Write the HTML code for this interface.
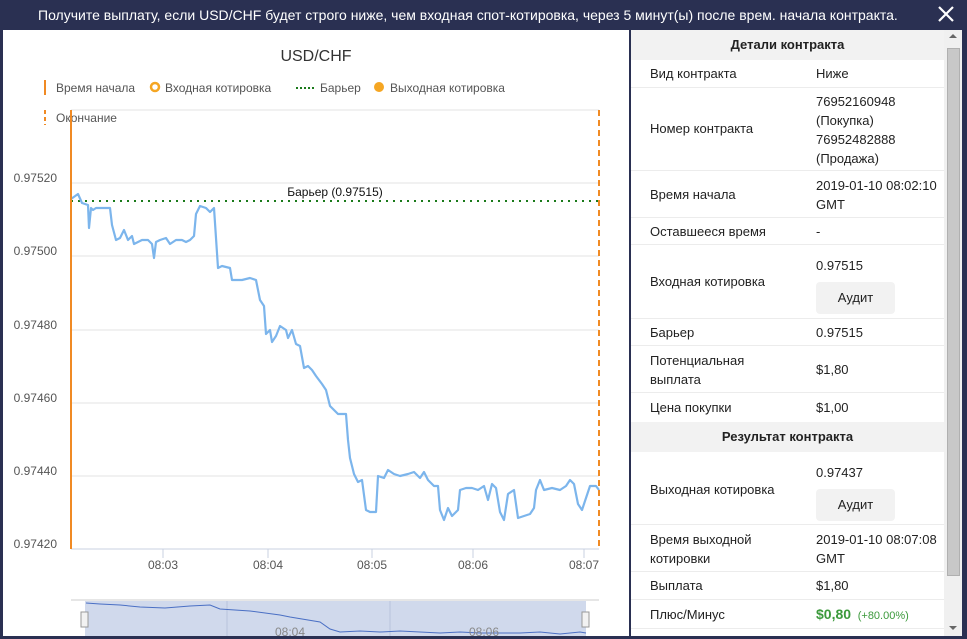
<!DOCTYPE html>
<html><head><meta charset="utf-8"><style>
*{margin:0;padding:0;box-sizing:border-box}
body{width:967px;height:639px;background:#2a3052;font-family:"Liberation Sans","DejaVu Sans",sans-serif;position:relative;overflow:hidden}
.top{position:absolute;left:0;top:0;width:967px;height:30px;color:#fff;font-size:14px;line-height:30px;padding-left:38px}
.close{position:absolute;right:12px;top:4px;width:18px;height:20px}
.left{position:absolute;left:3px;top:30px;width:626px;height:606px;background:#fff;overflow:hidden}
.right{position:absolute;left:631px;top:30px;width:313px;height:606px;background:#fff;font-size:13px;color:#222}
.sb{position:absolute;left:944px;top:30px;width:18px;height:606px;background:#f0f0f0}
.thumb{position:absolute;left:947px;top:48px;width:13px;height:528px;background:#c8c8c8;border:1px solid #b0b0b0}
.hd{background:#f2f2f2;font-weight:bold;text-align:center;position:absolute;left:0;width:313px}
.row{position:absolute;left:0;width:313px;border-bottom:1px solid #ececec}
.l{position:absolute;left:19px}
.v{position:absolute;left:185px;line-height:19px}
.btn{position:absolute;left:185px;width:79px;height:32px;background:#f2f2f2;border-radius:4px;text-align:center;line-height:32px}
</style></head><body>
<div class="top">Получите выплату, если USD/CHF будет строго ниже, чем входная спот-котировка, через 5 минут(ы) после врем. начала контракта.</div>
<svg class="close" viewBox="0 0 18 20"><path d="M2 3L16 17M16 3L2 17" stroke="#fff" stroke-width="2.2"/></svg>
<div class="left">
<svg width="626" height="606" viewBox="3 30 626 606" style="position:absolute;left:0;top:0" font-family="Liberation Sans,DejaVu Sans,sans-serif">
<text x="316" y="61" font-size="16" fill="#333" text-anchor="middle">USD/CHF</text>
<line x1="45" y1="80" x2="45" y2="95" stroke="#f08a24" stroke-width="2"/>
<text x="56" y="92" font-size="12" fill="#555">Время начала</text>
<circle cx="155" cy="87" r="4" fill="none" stroke="#f5a623" stroke-width="2.5"/>
<text x="165" y="92" font-size="12" fill="#555">Входная котировка</text>
<line x1="296" y1="88" x2="316" y2="88" stroke="#1a7a1a" stroke-width="2" stroke-dasharray="2,2"/>
<text x="320" y="92" font-size="12" fill="#555">Барьер</text>
<circle cx="379" cy="87" r="5" fill="#f5a623"/>
<text x="390" y="92" font-size="12" fill="#555">Выходная котировка</text>
<line x1="45" y1="110" x2="45" y2="125" stroke="#f08a24" stroke-width="2" stroke-dasharray="4,3"/>
<text x="56" y="122" font-size="12" fill="#555">Окончание</text>
<g stroke="#e3e3e3" stroke-width="1">
<line x1="71" y1="110" x2="599" y2="110"/><line x1="71" y1="183" x2="599" y2="183"/><line x1="71" y1="256" x2="599" y2="256"/><line x1="71" y1="330" x2="599" y2="330"/><line x1="71" y1="403" x2="599" y2="403"/><line x1="71" y1="476" x2="599" y2="476"/>
</g>
<line x1="71" y1="549" x2="599" y2="549" stroke="#c8d0e0"/>
<g stroke="#c8d0e0"><line x1="163" y1="549" x2="163" y2="558"/><line x1="268" y1="549" x2="268" y2="558"/><line x1="372" y1="549" x2="372" y2="558"/><line x1="473" y1="549" x2="473" y2="558"/><line x1="584" y1="549" x2="584" y2="558"/></g>
<g font-size="12" fill="#555" text-anchor="end">
<text x="57" y="182">0.97520</text><text x="57" y="255">0.97500</text><text x="57" y="329">0.97480</text><text x="57" y="402">0.97460</text><text x="57" y="475">0.97440</text><text x="57" y="548">0.97420</text></g>
<g font-size="12" fill="#555" text-anchor="middle">
<text x="163" y="569">08:03</text><text x="268" y="569">08:04</text><text x="372" y="569">08:05</text><text x="473" y="569">08:06</text><text x="584" y="569">08:07</text></g>
<line x1="71" y1="201" x2="599" y2="201" stroke="#1a7a1a" stroke-width="2" stroke-dasharray="2,5"/>
<text x="335" y="196" font-size="12" fill="#111" text-anchor="middle">Барьер (0.97515)</text>
<polyline fill="none" stroke="#7cb5ec" stroke-width="2.2" stroke-linejoin="round" points="71,199 78,194 82,203 88,205 89,228 91,208 93,210 96,208 100,208 110,208 112,225 116,240 120,238 124,230 128,240 132,236 134,244 138,242 142,240 148,240 152,244 154,258 156,242 160,240 166,238 170,244 176,240 182,240 186,242 190,240 194,236 196,214 200,206 206,208 210,212 214,208 216,238 218,268 222,266 230,268 232,280 242,280 250,278 256,280 260,300 264,306 266,334 270,330 272,342 276,336 280,326 286,330 288,338 292,330 296,344 300,346 304,368 308,366 312,370 316,376 322,384 326,390 330,406 334,410 338,414 346,414 348,440 350,458 354,474 358,482 362,480 366,510 370,512 376,512 378,476 384,478 388,470 394,474 400,476 408,474 414,472 420,478 424,472 428,480 434,486 438,486 440,510 444,520 448,508 452,516 458,510 460,490 466,488 472,488 478,490 484,486 488,500 492,484 496,488 500,512 504,520 508,494 514,490 518,518 524,516 530,514 534,508 536,490 540,480 544,490 552,488 560,490 566,486 570,480 574,484 578,504 582,510 586,498 590,486 596,486 599,490"/>
<line x1="71" y1="110" x2="71" y2="549" stroke="#f08a24" stroke-width="2"/>
<line x1="599" y1="110" x2="599" y2="549" stroke="#f08a24" stroke-width="2" stroke-dasharray="6,4"/>
<line x1="71" y1="600" x2="599" y2="600" stroke="#ccc"/>
<rect x="85" y="601" width="501" height="40" fill="#d0d9ec"/>
<line x1="227" y1="601" x2="227" y2="640" stroke="#b8c4dc"/><line x1="390" y1="601" x2="390" y2="640" stroke="#b8c4dc"/>
<polyline fill="none" stroke="#4a6fc4" stroke-width="1" points="86,603 100,604 120,605 140,607 165,608 190,606 210,605 220,609 250,611 280,615 290,617 320,622 330,629 340,632 360,631 380,632 400,631 420,632 440,633 460,632 480,633 500,633 520,633 540,632 560,634 580,632 586,633"/>
<text x="290" y="636" font-size="12" fill="#888" text-anchor="middle">08:04</text>
<text x="484" y="636" font-size="12" fill="#888" text-anchor="middle">08:06</text>
<rect x="81" y="612" width="7" height="15" fill="#f2f2f2" stroke="#999"/>
<rect x="582" y="612" width="7" height="15" fill="#f2f2f2" stroke="#999"/>
</svg>
</div>
<div class="right">
<div class="hd" style="top:0;height:30px;line-height:30px">Детали контракта</div>
<div class="row" style="top:30px;height:28px"><span class="l" style="top:6px">Вид контракта</span><span class="v" style="top:4px">Ниже</span></div>
<div class="row" style="top:58px;height:83px"><span class="l" style="top:33px">Номер контракта</span><span class="v" style="top:4px">76952160948<br>(Покупка)<br>76952482888<br>(Продажа)</span></div>
<div class="row" style="top:141px;height:47px"><span class="l" style="top:16px">Время начала</span><span class="v" style="top:5px">2019-01-10 08:02:10<br>GMT</span></div>
<div class="row" style="top:188px;height:27px"><span class="l" style="top:6px">Оставшееся время</span><span class="v" style="top:4px">-</span></div>
<div class="row" style="top:215px;height:74px"><span class="l" style="top:29px">Входная котировка</span><span class="v" style="top:11px">0.97515</span><div class="btn" style="top:37px">Аудит</div></div>
<div class="row" style="top:289px;height:27px"><span class="l" style="top:6px">Барьер</span><span class="v" style="top:4px">0.97515</span></div>
<div class="row" style="top:316px;height:47px"><span class="l" style="top:5px;line-height:19px">Потенциальная<br>выплата</span><span class="v" style="top:14px">$1,80</span></div>
<div class="row" style="top:363px;height:29px;border:0"><span class="l" style="top:7px">Цена покупки</span><span class="v" style="top:5px">$1,00</span></div>
<div class="hd" style="top:392px;height:30px;line-height:30px">Результат контракта</div>
<div class="row" style="top:422px;height:73px"><span class="l" style="top:30px">Выходная котировка</span><span class="v" style="top:11px">0.97437</span><div class="btn" style="top:37px">Аудит</div></div>
<div class="row" style="top:495px;height:47px"><span class="l" style="top:5px;line-height:19px">Время выходной<br>котировки</span><span class="v" style="top:5px">2019-01-10 08:07:08<br>GMT</span></div>
<div class="row" style="top:542px;height:28px"><span class="l" style="top:6px">Выплата</span><span class="v" style="top:4px">$1,80</span></div>
<div class="row" style="top:570px;height:29px"><span class="l" style="top:7px">Плюс/Минус</span><span class="v" style="top:5px"><b style="color:#3c9a3c;font-size:14px">$0,80</b> <span style="color:#3c9a3c;font-size:11px">&nbsp;(+80.00%)</span></span></div>
</div>
<div class="sb"></div><div class="thumb"></div>
<div style="position:absolute;left:949px;top:34px;width:0;height:0;border:4px solid transparent;border-bottom:4px solid #666;border-top:0"></div>
<div style="position:absolute;left:949px;top:626px;width:0;height:0;border:4px solid transparent;border-top:4px solid #666;border-bottom:0"></div>
</body></html>
